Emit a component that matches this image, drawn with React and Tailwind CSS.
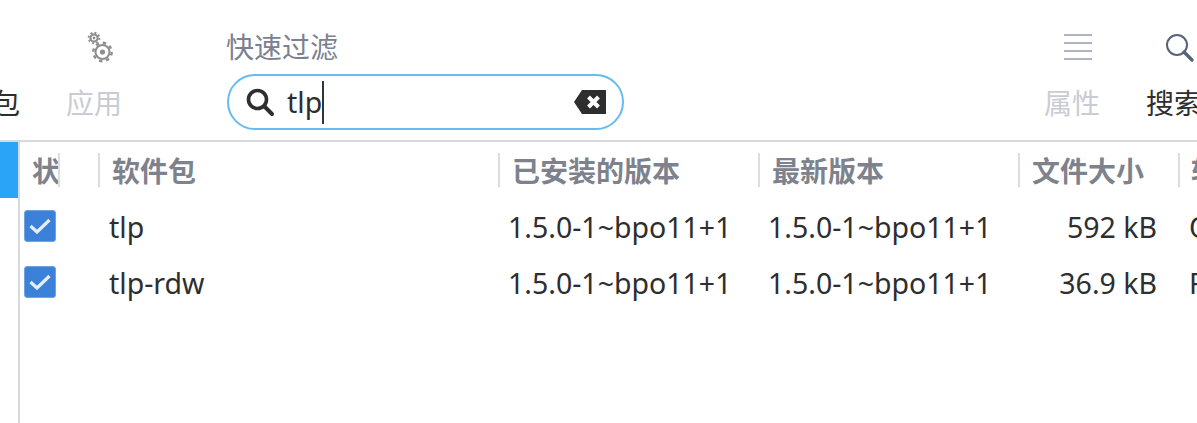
import React from 'react';

const cjk = '"Noto Sans", "Noto Sans CJK SC", sans-serif';

const rows = [
  { name: 'tlp', installed: '1.5.0-1~bpo11+1', latest: '1.5.0-1~bpo11+1', size: '592 kB', desc: 'Optimize laptop battery life' },
  { name: 'tlp-rdw', installed: '1.5.0-1~bpo11+1', latest: '1.5.0-1~bpo11+1', size: '36.9 kB', desc: 'Radio device wizard' },
];

const columns = [
  { label: '状', width: 'w-[40px]', pad: 'pl-[12px]' },
  { label: '', width: 'w-[40px]', pad: '' },
  { label: '软件包', width: 'w-[400px]', pad: 'pl-[12px]' },
  { label: '已安装的版本', width: 'w-[260px]', pad: 'pl-[12px]' },
  { label: '最新版本', width: 'w-[260px]', pad: 'pl-[12px]' },
  { label: '文件大小', width: 'w-[160px]', pad: 'pl-[12px]' },
  { label: '软件包描述', width: 'w-[200px]', pad: 'pl-[11px]' },
];

const GearsIcon = () => (
  <svg width="28" height="32" viewBox="0 0 28 32" fill="none" stroke="#8e8e8e" className="mt-[9px] ml-[13px]">
    <circle cx="7" cy="7" r="3.6" strokeWidth="2.2" />
    <circle cx="7" cy="7" r="5.4" strokeWidth="1.8" strokeDasharray="2 2.2" />
    <circle cx="7" cy="7" r="1.4" fill="#8e8e8e" stroke="none" />
    <circle cx="15.5" cy="21" r="7" strokeWidth="2" />
    <circle cx="15.5" cy="21" r="9.2" strokeWidth="2.4" strokeDasharray="3.4 3.82" />
    <circle cx="15.5" cy="21" r="2.6" fill="#8e8e8e" stroke="none" />
  </svg>
);

const ClearIcon = () => (
  <svg width="34" height="24" viewBox="0 0 34 24">
    <path d="M9 0H33V24H9L1 12Z" fill="#2e2e2e" />
    <path d="M15.5 7L25.5 17M25.5 7L15.5 17" stroke="#fff" strokeWidth="4" />
  </svg>
);

const ToolButton = ({ icon, label, width, dim }) => (
  <div className={`${width} shrink-0 flex flex-col items-center`}>
    <div className="h-[61px] flex items-start justify-center">{icon}</div>
    <div className={`text-[28px] leading-[40px] whitespace-nowrap ${dim ? 'text-[#c9ccd4]' : 'text-[#2e2e2e]'}`}>{label}</div>
  </div>
);

const App = () => {
  return (
    <div className="w-[1197px] h-[423px] overflow-hidden bg-white flex flex-col" style={{ fontFamily: cjk }}>
      <div className="h-[142px] shrink-0 flex pt-[22px] border-b-2 border-[#d8d9de]">
        <div className="w-[20px] shrink-0 overflow-hidden flex justify-end">
          <div className="text-[28px] leading-[40px] mt-[61px] text-[#2e2e2e] shrink-0">包</div>
        </div>
        <ToolButton width="w-[148px]" dim label="应用" icon={<GearsIcon />} />
        <div className="w-[59px] shrink-0" />
        <div className="w-[397px] shrink-0 flex flex-col">
          <div className="text-[28px] leading-[40px] h-[52px] pt-[5px] box-content -mb-[5px] -ml-[1px] text-[#7b8190]">快速过滤</div>
          <div className="h-[56px] rounded-[28px] border-2 border-[#66bbf0] flex items-center pl-[16px] pr-[15px]">
            <svg width="30" height="30" viewBox="0 0 30 30" fill="none" stroke="#2e2e2e" className="shrink-0">
              <circle cx="12.5" cy="12.5" r="9" strokeWidth="3.6" />
              <path d="M19.5 19.5L27 27" strokeWidth="4" strokeLinecap="round" />
            </svg>
            <span className="ml-[12px] text-[28.5px] leading-none text-[#2e2e2e]">tlp</span>
            <span className="w-[2px] h-[43px] bg-[#2e3440] shrink-0" />
            <div className="flex-1" />
            <ClearIcon />
          </div>
        </div>
        <div className="w-[394px] shrink-0" />
        <ToolButton
          width="w-[108px]"
          dim
          label="属性"
          icon={
            <div className="flex flex-col gap-[6px] mt-[12px] ml-[12px]">
              <div className="w-[28px] h-[2px] bg-[#b0b3bf]" />
              <div className="w-[28px] h-[2px] bg-[#b0b3bf]" />
              <div className="w-[28px] h-[2px] bg-[#b0b3bf]" />
              <div className="w-[28px] h-[2px] bg-[#b0b3bf]" />
            </div>
          }
        />
        <ToolButton
          width="w-[96px]"
          label="搜索"
          icon={
            <svg width="30" height="30" viewBox="0 0 30 30" fill="none" stroke="#566376" className="mt-[11px] ml-[12px]">
              <circle cx="12" cy="12" r="10" strokeWidth="2" />
              <path d="M19 19L27 27" strokeWidth="3.4" strokeLinecap="round" />
            </svg>
          }
        />
      </div>

      <div className="flex-1 flex min-h-0">
        <div className="w-[20px] shrink-0 border-r-2 border-[#d8d9de]">
          <div className="h-[56px] bg-[#2aa4f7]" />
        </div>
        <div className="flex-1 min-w-0 overflow-hidden">
          <div className="h-[56px] flex items-center w-[1400px]">
            {columns.map((col, i) => (
              <div key={i} className={`${col.width} shrink-0 h-[34px] flex items-center relative ${col.pad}`}>
                <span className="pt-[2px] text-[28px] font-bold text-[#7e828c] leading-none whitespace-nowrap">{col.label}</span>
                {i < columns.length - 1 && <span className="absolute right-0 top-0 w-[2px] h-[34px] bg-[#dcdde0]" />}
              </div>
            ))}
          </div>
          {rows.map((row) => (
            <div key={row.name} className="h-[56px] flex items-center w-[1400px] text-[28.5px] leading-[40px] text-[#2e2e2e] whitespace-nowrap">
              <div className="w-[80px] shrink-0 pl-[4px]">
                <div className="w-[32px] h-[32px] rounded-[3px] bg-[#3b80d9] border border-[#6fa3e6] flex items-center justify-center">
                  <svg width="22" height="16" viewBox="0 0 22 16" fill="none" stroke="#e8eef8" strokeWidth="3.2">
                    <path d="M1.5 8L8 14L20.5 2" />
                  </svg>
                </div>
              </div>
              <div className="w-[400px] shrink-0 pl-[9px] pt-[2px]">{row.name}</div>
              <div className="w-[260px] shrink-0 pl-[8px] pt-[2px]">{row.installed}</div>
              <div className="w-[260px] shrink-0 pl-[8px] pt-[2px]">{row.latest}</div>
              <div className="w-[160px] shrink-0 pr-[23px] pt-[2px] text-right">{row.size}</div>
              <div className="w-[200px] shrink-0 pl-[9px] pt-[2px]">{row.desc}</div>
            </div>
          ))}
        </div>
      </div>
    </div>
  );
};

export default App;
